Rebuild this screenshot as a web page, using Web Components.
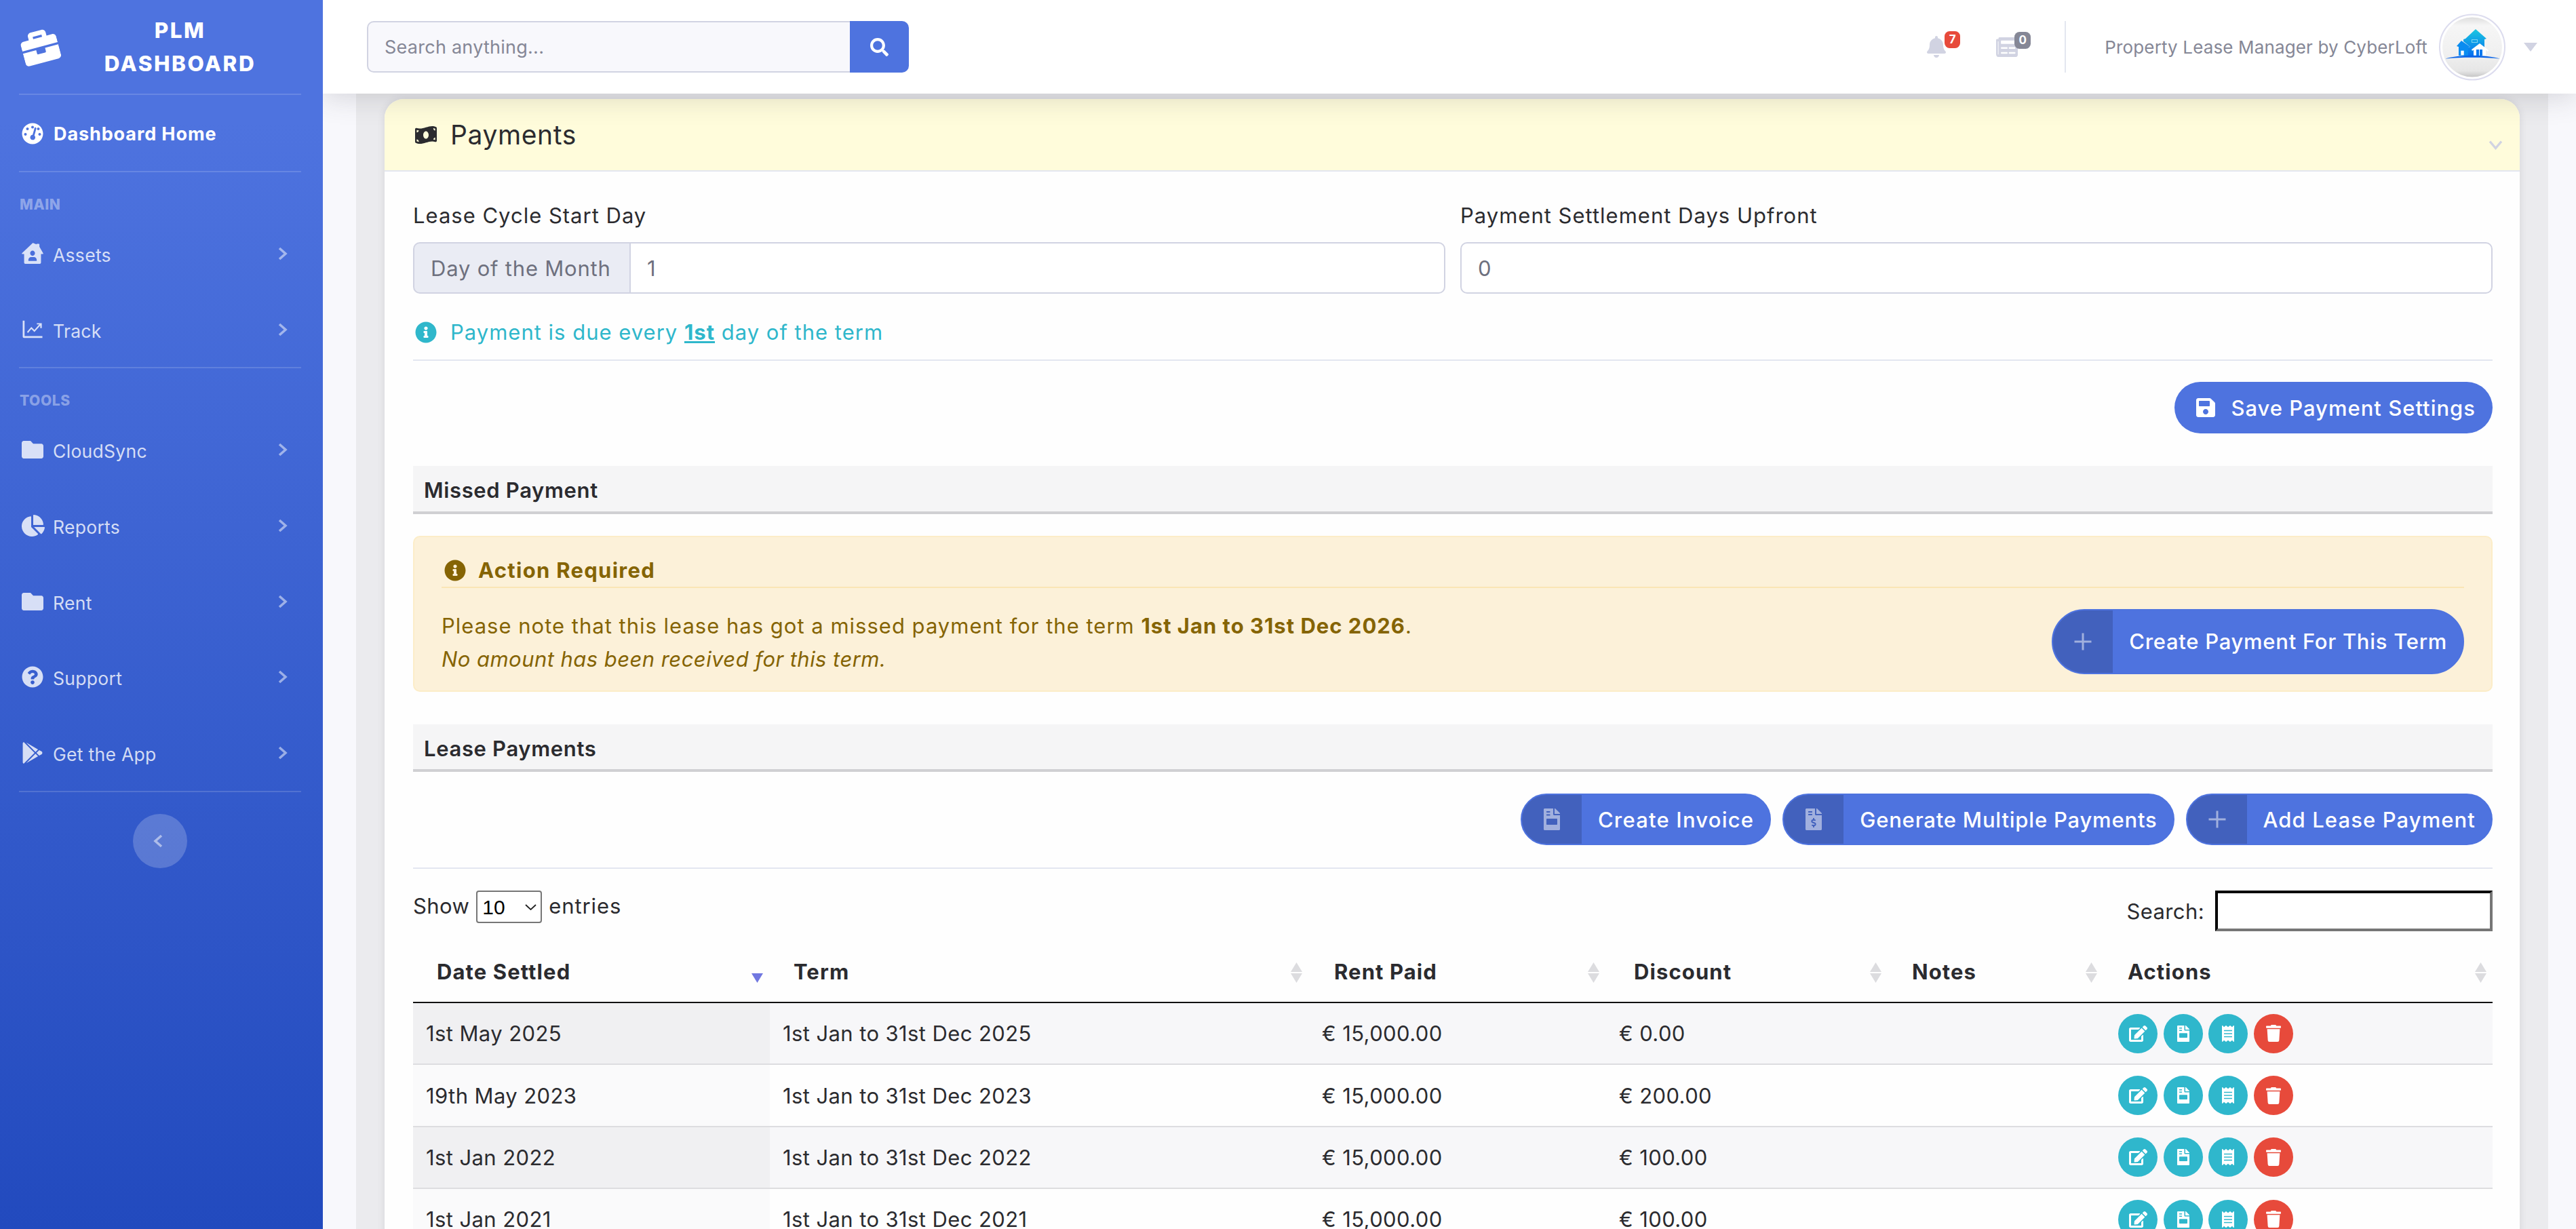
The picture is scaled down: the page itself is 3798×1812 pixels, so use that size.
<!DOCTYPE html>
<html lang="en">
<head>
<meta charset="utf-8">
<title>PLM Dashboard</title>
<style>
  html, body { margin: 0; height: 100%; overflow: hidden; }
  body { display: flex; background: #f8f8fc; font-family: "Inter", "Liberation Sans", sans-serif; color: #2b2b2f; }
</style>
</head>
<body>
<plm-sidebar></plm-sidebar>
<plm-main>
  <plm-topbar></plm-topbar>
  <plm-panel>
    <plm-card icon="money" heading="Payments">
      <payment-settings></payment-settings>
      <plm-section heading="Missed Payment"></plm-section>
      <plm-alert></plm-alert>
      <plm-section heading="Lease Payments"></plm-section>
      <div style="display:flex;justify-content:flex-end;gap:17px;margin-top:32px">
        <split-button icon="invoice" style="letter-spacing:1.2px">Create Invoice</split-button>
        <split-button icon="invoiceDollar">Generate Multiple Payments</split-button>
        <split-button icon="plus" style="letter-spacing:1.1px">Add Lease Payment</split-button>
      </div>
      <payments-table></payments-table>
    </plm-card>
  </plm-panel>
</plm-main>

<script>
// third entry = extra svg attributes for the icons that need them
const STRETCH = 'preserveAspectRatio="none"';
const ICONS = {
  briefcase: ['0 0 512 512', 'M320 336c0 8.84-7.16 16-16 16h-96c-8.84 0-16-7.16-16-16v-48H0v144c0 25.6 22.4 48 48 48h416c25.6 0 48-22.4 48-48V288H320v48zm144-208h-80V80c0-25.6-22.4-48-48-48H176c-25.6 0-48 22.4-48 48v48H48c-25.6 0-48 22.4-48 48v80h512v-80c0-25.6-22.4-48-48-48zm-144 0H192V96h128v32z'],
  gauge: ['0 0 512 512', 'M256 8C119 8 8 119 8 256s111 248 248 248 248-111 248-248S393 8 256 8zm0 64c17.7 0 32 14.3 32 32s-14.3 32-32 32-32-14.3-32-32 14.3-32 32-32zM88 304c-17.7 0-32-14.3-32-32s14.3-32 32-32 32 14.300 32 32-14.3 32-32 32zm48-128c-17.700 0-32-14.3-32-32s14.3-32 32-32 32 14.3 32 32-14.3 32-32 32zm208-34-44 158c15 13 22 30 20 50-3 33-33 58-66 54-33-3-58-33-54-66 3-30 27-53 57-55l44-157c3-12 16-20 28-16 12 3 19 20 15 32zm80 162c-17.700 0-32-14.3-32-32s14.3-32 32-32 32 14.300 32 32-14.3 32-32 32zm-32-128c-17.700 0-32-14.3-32-32s14.300-32 32-32 32 14.3 32 32-14.3 32-32 32z'],
  houseUser: ['0 0 576 512', 'M288 8 8 250c-8 8-4 22 8 22h48v208c0 18 14 32 32 32h384c18 0 32-14 32-32V272h48c12 0 16-14 8-22L470 96V40c0-9-7-16-16-16h-48c-9 0-16 7-16 16v-4L312 8c-7-6-17-6-24 0zm0 180c35 0 64 29 64 64s-29 64-64 64-64-29-64-64 29-64 64-64zm-112 236c0-42 34-76 76-76h72c42 0 76 34 76 76 0 9-7 16-16 16H192c-9 0-16-7-16-16z', STRETCH],
  folder: ['0 64 512 384', 'M464 128H272l-64-64H48C21.49 64 0 85.49 0 112v288c0 26.51 21.49 48 48 48h416c26.51 0 48-21.49 48-48V176c0-26.51-21.49-48-48-48z', STRETCH],
  pie: ['0 0 544 512', 'M527.79 288H290.5l158.03 158.03c6.04 6.04 15.98 6.53 22.19.68 38.7-36.46 65.32-85.61 73.13-140.86 1.34-9.46-6.51-17.85-16.06-17.85zm-15.83-64.8C503.72 103.74 408.26 8.28 288.8.04 279.68-.59 272 7.1 272 16.24V240h223.77c9.14 0 16.82-7.68 16.19-16.8zM224 288V50.71c0-9.55-8.39-17.4-17.84-16.06C86.99 51.49-4.1 155.6.14 280.37 4.5 408.51 114.83 513.59 243.03 511.98c50.4-.63 96.97-16.87 135.26-44.03 7.9-5.6 8.42-17.23 1.57-24.08L224 288z', STRETCH],
  question: ['0 0 512 512', 'M504 256c0 136.997-111.043 248-248 248S8 392.997 8 256C8 119.083 119.043 8 256 8s248 111.083 248 248zM262.655 90c-54.497 0-89.255 22.957-116.549 63.758-3.536 5.286-2.353 12.415 2.715 16.258l34.699 26.31c5.205 3.947 12.621 3.008 16.665-2.122 17.864-22.658 30.113-35.797 57.303-35.797 20.429 0 45.698 13.148 45.698 32.958 0 14.976-12.363 22.667-32.534 33.976C247.128 238.528 216 254.941 216 296v4c0 6.627 5.373 12 12 12h56c6.627 0 12-5.373 12-12v-1.333c0-28.462 83.186-29.647 83.186-106.667 0-58.002-60.165-102-116.531-102zM256 338c-25.365 0-46 20.635-46 46 0 25.364 20.635 46 46 46s46-20.636 46-46c0-25.365-20.635-46-46-46z'],
  play: ['0 0 512 512', 'M325.3 234.3L104.6 13l280.8 161.2-60.1 60.1zM47 0C34 6.8 25.3 19.2 25.3 35.3v441.3c0 16.1 8.7 28.5 21.7 35.3l256.6-256L47 0zm425.2 225.6l-58.9-34.1-65.7 64.5 65.7 64.5 60.1-34.1c18-14.3 18-46.5-1.2-60.8zM104.6 499l280.8-161.2-60.1-60.1L104.6 499z'],
  info: ['0 0 512 512', 'M256 8C119.043 8 8 119.083 8 256c0 136.997 111.043 248 248 248s248-111.003 248-248C504 119.083 392.957 8 256 8zm0 110c23.196 0 42 18.804 42 42s-18.804 42-42 42-42-18.804-42-42 18.804-42 42-42zm56 254c0 6.627-5.373 12-12 12h-88c-6.627 0-12-5.373-12-12v-24c0-6.627 5.373-12 12-12h12v-64h-12c-6.627 0-12-5.373-12-12v-24c0-6.627 5.373-12 12-12h64c6.627 0 12 5.373 12 12v100h12c6.627 0 12 5.373 12 12v24z'],
  search: ['0 0 512 512', 'M505 442.7L405.3 343c-4.5-4.5-10.6-7-17-7H372c27.6-35.3 44-79.7 44-128C416 93.1 322.9 0 208 0S0 93.1 0 208s93.1 208 208 208c48.3 0 92.7-16.4 128-44v16.3c0 6.4 2.5 12.5 7 17l99.7 99.7c9.4 9.4 24.6 9.4 33.9 0l28.3-28.3c9.4-9.4 9.4-24.6.1-34zM208 336c-70.7 0-128-57.2-128-128 0-70.7 57.2-128 128-128 70.7 0 128 57.2 128 128 0 70.7-57.2 128-128 128z'],
  bell: ['0 0 448 512', 'M224 512c35.32 0 63.97-28.65 63.97-64H160.03c0 35.35 28.65 64 63.97 64zm215.39-149.71c-19.32-20.76-55.47-51.99-55.47-154.29 0-77.7-54.48-139.9-127.94-155.16V32c0-17.67-14.32-32-31.98-32s-31.98 14.33-31.98 32v20.84C118.56 68.1 64.08 130.3 64.08 208c0 102.3-36.15 133.53-55.47 154.29-6 6.45-8.66 14.16-8.61 21.71.11 16.4 12.98 32 32.1 32h383.8c19.12 0 32-15.6 32.1-32 .05-7.55-2.61-15.27-8.61-21.71z'],
  news: ['0 64 576 384', 'M552 64H88c-13.255 0-24 10.745-24 24v8H24c-13.255 0-24 10.745-24 24v272c0 30.928 25.072 56 56 56h472c26.51 0 48-21.49 48-48V88c0-13.255-10.745-24-24-24zM56 400a8 8 0 0 1-8-8V144h16v248a8 8 0 0 1-8 8zm236-16H140c-6.627 0-12-5.373-12-12v-8c0-6.627 5.373-12 12-12h152c6.627 0 12 5.373 12 12v8c0 6.627-5.373 12-12 12zm208 0H348c-6.627 0-12-5.373-12-12v-8c0-6.627 5.373-12 12-12h152c6.627 0 12 5.373 12 12v8c0 6.627-5.373 12-12 12zm-208-96H140c-6.627 0-12-5.373-12-12v-8c0-6.627 5.373-12 12-12h152c6.627 0 12 5.373 12 12v8c0 6.627-5.373 12-12 12zm208 0H348c-6.627 0-12-5.373-12-12v-8c0-6.627 5.373-12 12-12h152c6.627 0 12 5.373 12 12v8c0 6.627-5.373 12-12 12zm0-96H140c-6.627 0-12-5.373-12-12v-40c0-6.627 5.373-12 12-12h360c6.627 0 12 5.373 12 12v40c0 6.627-5.373 12-12 12z', STRETCH],
  money: ['0 32 640 448', 'M621.16 54.46C582.37 38.19 543.55 32 504.75 32c-123.17-.01-246.33 62.34-369.5 62.34-30.89 0-61.76-3.92-92.65-13.72-3.47-1.1-6.95-1.62-10.35-1.62C15.04 79 0 92.32 0 110.81v317.26c0 12.63 7.23 24.6 18.84 29.46C57.63 473.81 96.45 480 135.25 480c123.17 0 246.34-62.35 369.51-62.35 30.89 0 61.76 3.92 92.65 13.72 3.47 1.1 6.95 1.62 10.35 1.62 17.21 0 32.25-13.32 32.25-31.81V83.93c-.01-12.64-7.24-24.6-18.85-29.47zM48 132.22c20.12 5.04 41.12 7.57 62.72 8.93C104.84 170.54 79 192.69 48 192.69v-60.47zm0 285v-47.78c34.37 0 62.18 27.27 63.71 61.4-22.53-1.81-43.59-6.31-63.71-13.62zM320 352c-44.19 0-80-42.99-80-96 0-53.02 35.82-96 80-96s80 42.98 80 96c0 53.03-35.83 96-80 96zm272 27.78c-17.52-4.39-35.71-6.85-54.32-8.44 5.87-26.08 27.5-45.88 54.32-49.28v57.72zm0-236.11c-30.89-3.91-54.86-29.7-55.81-61.55 19.54 2.17 38.09 6.23 55.81 12.66v48.89z', STRETCH],
  save: ['0 0 448 512', 'M433.941 129.941l-83.882-83.882A48 48 0 0 0 316.118 32H48C21.49 32 0 53.49 0 80v352c0 26.51 21.49 48 48 48h352c26.51 0 48-21.49 48-48V163.882a48 48 0 0 0-14.059-33.941zM224 416c-35.346 0-64-28.654-64-64 0-35.346 28.654-64 64-64s64 28.654 64 64c0 35.346-28.654 64-64 64zm96-304.52V212c0 6.627-5.373 12-12 12H76c-6.627 0-12-5.373-12-12V108c0-6.627 5.373-12 12-12h228.52c3.183 0 6.235 1.264 8.485 3.515l3.48 3.48A11.996 11.996 0 0 1 320 111.48z'],
  plus: ['0 0 448 512', 'M200 56h48v176h176v48H248v176h-48V280H24v-48h176z'],
  invoice: ['0 0 384 512', 'M224 0H24C10.700 0 0 10.700 0 24v464c0 13.300 10.700 24 24 24h336c13.300 0 24-10.700 24-24V160H248c-13.200 0-24-10.800-24-24zM256 0v128h128v-6.100c0-6.300-2.500-12.400-7-16.900L279.100 7c-4.500-4.500-10.600-7-17-7zM72 64h72c4.400 0 8 3.600 8 8v16c0 4.400-3.600 8-8 8H72c-4.400 0-8-3.600-8-8V72c0-4.400 3.600-8 8-8zm0 72h72c4.400 0 8 3.600 8 8v16c0 4.400-3.600 8-8 8H72c-4.400 0-8-3.600-8-8v-16c0-4.400 3.600-8 8-8zm8 104h224c8.800 0 16 7.200 16 16v112c0 8.800-7.200 16-16 16H80c-8.800 0-16-7.200-16-16V256c0-8.800 7.200-16 16-16z', 'fill-rule="evenodd"'],
  invoiceDollar: ['0 0 384 512', 'M377 105L279.1 7c-4.5-4.5-10.6-7-17-7H256v128h128v-6.1c0-6.3-2.5-12.4-7-16.9zm-153 31V0H24C10.7 0 0 10.7 0 24v464c0 13.3 10.7 24 24 24h336c13.3 0 24-10.7 24-24V160H248c-13.2 0-24-10.8-24-24zM64 72c0-4.42 3.58-8 8-8h80c4.42 0 8 3.58 8 8v16c0 4.42-3.58 8-8 8H72c-4.42 0-8-3.58-8-8V72zm0 80v-16c0-4.42 3.58-8 8-8h80c4.42 0 8 3.58 8 8v16c0 4.42-3.58 8-8 8H72c-4.42 0-8-3.58-8-8zm144 263.88V440c0 4.42-3.58 8-8 8h-16c-4.42 0-8-3.58-8-8v-24.29c-11.29-.58-22.27-4.52-31.37-11.35-3.9-2.93-4.1-8.77-.57-12.14l11.75-11.21c2.77-2.64 6.89-2.76 10.13-.73 3.87 2.42 8.26 3.72 12.82 3.72h28.11c6.5 0 11.8-5.92 11.8-13.19 0-5.95-3.61-11.19-8.77-12.73l-45-13.5c-18.59-5.58-31.58-23.42-31.58-43.39 0-24.52 19.05-44.44 42.67-45.07V232c0-4.42 3.58-8 8-8h16c4.42 0 8 3.58 8 8v24.29c11.29.58 22.27 4.51 31.37 11.35 3.9 2.93 4.1 8.77.57 12.14l-11.75 11.21c-2.77 2.64-6.89 2.76-10.13.73-3.87-2.43-8.26-3.72-12.82-3.72h-28.11c-6.5 0-11.8 5.92-11.8 13.19 0 5.95 3.61 11.19 8.77 12.73l45 13.5c18.59 5.58 31.58 23.42 31.58 43.39 0 24.53-19.05 44.44-42.67 45.07z'],
  edit: ['0 0 576 512', 'M402.6 83.2l90.2 90.2c3.8 3.8 3.8 10 0 13.8L274.4 405.6l-92.8 10.3c-12.4 1.4-22.9-9.1-21.5-21.5l10.3-92.8L388.8 83.2c3.8-3.8 10-3.8 13.8 0zm162-22.9l-48.8-48.8c-15.2-15.2-39.9-15.2-55.2 0l-35.4 35.4c-3.8 3.8-3.8 10 0 13.8l90.2 90.2c3.8 3.8 10 3.8 13.8 0l35.4-35.4c15.2-15.3 15.2-40 0-55.2zM384 346.2V448H64V128h229.8c3.2 0 6.2-1.3 8.5-3.5l40-40c7.6-7.6 2.2-20.5-8.5-20.5H48C21.5 64 0 85.5 0 112v352c0 26.5 21.5 48 48 48h352c26.5 0 48-21.5 48-48V306.2c0-10.7-12.9-16-20.5-8.5l-40 40c-2.2 2.3-3.5 5.3-3.5 8.5z'],
  receipt: ['0 0 384 512', 'M358.4 3.2L320 48 265.6 3.2a15.9 15.9 0 0 0-19.2 0L192 48 137.6 3.2a15.9 15.9 0 0 0-19.2 0L64 48 25.6 3.2C15-4.7 0 2.8 0 16v480c0 13.2 15 20.7 25.6 12.8L64 464l54.4 44.8a15.9 15.9 0 0 0 19.2 0L192 464l54.4 44.8a15.9 15.9 0 0 0 19.2 0L320 464l38.4 44.8c10.5 7.9 25.6.4 25.6-12.8V16c0-13.2-15-20.7-25.6-12.8zM320 360c0 4.4-3.6 8-8 8H72c-4.4 0-8-3.6-8-8v-16c0-4.4 3.6-8 8-8h240c4.4 0 8 3.6 8 8v16zm0-96c0 4.4-3.6 8-8 8H72c-4.4 0-8-3.6-8-8v-16c0-4.4 3.6-8 8-8h240c4.4 0 8 3.6 8 8v16zm0-96c0 4.4-3.6 8-8 8H72c-4.4 0-8-3.6-8-8v-16c0-4.4 3.6-8 8-8h240c4.4 0 8 3.6 8 8v16z'],
  trash: ['0 0 448 512', 'M432 32H312l-9.4-18.7A24 24 0 0 0 281.1 0H166.8a23.72 23.72 0 0 0-21.4 13.3L136 32H16A16 16 0 0 0 0 48v32a16 16 0 0 0 16 16h416a16 16 0 0 0 16-16V48a16 16 0 0 0-16-16zM53.2 467a48 48 0 0 0 47.9 45h245.8a48 48 0 0 0 47.9-45L416 128H32z'],
  chartLine: ['0 0 32 32', 'M0 2h3v25h29v3H2a2 2 0 0 1-2-2zm7 18 7-8 5 5 8-9h-4V6h8v8h-2.500v-4l-9.500 10.500-5-5-5.500 6.500z']
};

function icon(name, w, h) {
  const [box, d, extra = ''] = ICONS[name];
  return `<svg viewBox="${box}" width="${w}" height="${h}" ${extra} style="display:block;flex:none" fill="currentColor" aria-hidden="true"><path d="${d}"/></svg>`;
}

const CHEVRON = `<svg viewBox="0 0 14 20" width="14" height="20" fill="none" stroke="currentColor" stroke-width="3.6"><path d="M2 2l9 8-9 8"/></svg>`;

class PlmSidebar extends HTMLElement {
  constructor() {
    super();
    this.attachShadow({ mode: 'open' });
    const item = (ic, label, w = 32, h = 32) => `<a class="item"><span class="ic">${icon(ic, w, h)}</span><span class="lb">${label}</span><span class="chev">${CHEVRON}</span></a>`;
    this.shadowRoot.innerHTML = `
      <style>
        :host { display: block; flex: none; width: 476px; height: 100%; background: linear-gradient(180deg, #4e73df 10%, #224abe 100%); color: #fff; font-family: "Inter", "Liberation Sans", sans-serif; position: relative; z-index: 3; }
        .brand { height: 138px; display: flex; align-items: center; position: relative; }
        .brand svg { margin-left: 32px; transform: rotate(-15deg); }
        .brand div { position: absolute; left: 80px; width: 371px; text-align: center; font-weight: 800; font-size: 31.500px; line-height: 49px; letter-spacing: 2.500px; }
        hr { border: 0; height: 2px; margin: 0 32px 0 28px; background: rgba(255,255,255,.15); }
        .home { height: 112px; display: flex; align-items: center; padding-left: 32px; font-weight: 700; font-size: 27px; letter-spacing: .9px; gap: 15px; padding-top: 2px; box-sizing: border-box; }
        h6 { margin: 0; height: 66px; padding: 37px 0 0 29px; box-sizing: border-box; font-size: 21px; line-height: 22px; font-weight: 800; letter-spacing: .6px; color: rgba(255,255,255,.4); }
        .item { height: 111.7px; display: flex; align-items: center; padding-left: 32px; color: rgba(255,255,255,.8); font-size: 26.500px; font-weight: 400; letter-spacing: .3px; }
        .ic { width: 46px; margin-top: -4px; }
        .lb { flex: 1; }
        .chev { color: rgba(255,255,255,.5); width: 66px; margin-top: -4px; }
        .toggle { width: 80px; height: 80px; margin: 32px 0 0 196px; border-radius: 50%; background: rgba(255,255,255,.2); display: flex; align-items: center; justify-content: center; color: rgba(255,255,255,.5); }
        .toggle svg { transform: scaleX(-1); margin-right: 6px; }
      </style>
      <div class="brand">${icon('briefcase', 54, 54)}<div>PLM<br>DASHBOARD</div></div>
      <hr>
      <div class="home">${icon('gauge', 32, 32)}<span>Dashboard Home</span></div>
      <hr>
      <h6>MAIN</h6>
      ${item('houseUser', 'Assets', 32, 31)}
      ${item('chartLine', 'Track', 32, 29)}
      <hr style="margin-top:-2px">
      <h6>TOOLS</h6>
      ${item('folder', 'CloudSync', 32, 26)}
      ${item('pie', 'Reports', 34, 32)}
      ${item('folder', 'Rent', 32, 26)}
      ${item('question', 'Support')}
      ${item('play', 'Get the App')}
      <hr style="margin-top:-2px">
      <div class="toggle">${CHEVRON}</div>
    `;
  }
}

class PlmMain extends HTMLElement {
  constructor() {
    super();
    this.attachShadow({ mode: 'open' });
    this.shadowRoot.innerHTML = `
      <style>:host { display: flex; flex-direction: column; flex: 1; min-width: 0; height: 100%; overflow: hidden; }</style>
      <slot></slot>`;
  }
}

class PlmTopbar extends HTMLElement {
  constructor() {
    super();
    this.attachShadow({ mode: 'open' });
    this.shadowRoot.innerHTML = `
      <style>
        :host { display: flex; flex: none; align-items: center; height: 138px; background: #fff; box-shadow: 0 4px 40px rgba(58,59,69,.2); position: relative; z-index: 2; padding: 0 57px 0 65px; }
        .search { display: flex; width: 799px; height: 76px; }
        input { flex: 1; min-width: 0; box-sizing: border-box; background: #f8f8fc; border: 2px solid #d1d3e2; border-right: 0; border-radius: 10px 0 0 10px; padding: 0 24px; font: 400 27px "Inter", sans-serif; letter-spacing: .25px; }
        input::placeholder { color: #858796; opacity: 1; }
        .go { width: 87px; background: #4e73df; color: #fff; border-radius: 0 10px 10px 0; display: flex; align-items: center; justify-content: center; }
        .right { margin-left: auto; display: flex; align-items: center; }
        .bell { position: relative; color: #d1d3e2; width: 32px; }
        .badge { position: absolute; top: -7px; left: 26px; width: 23px; height: 25px; border-radius: 7.500px; color: #fff; font: 700 17px/25px "Inter", sans-serif; text-align: center; }
        .news { margin-left: 70px; }
        .sep { width: 2px; height: 76px; background: #e3e6f0; margin: 0 57px 0 69px; }
        .name { font-size: 26px; letter-spacing: .14px; color: #858796; white-space: nowrap; }
        .avatar { margin-left: 17px; width: 98px; height: 99px; flex: none; }
        .caret { margin-left: 27px; width: 0; height: 0; border: 10px solid transparent; border-top: 13px solid #d1d3e2; border-bottom: 0; }
      </style>
      <div class="search"><input placeholder="Search anything..."><div class="go">${icon('search', 27, 27)}</div></div>
      <div class="right">
        <div class="bell">${icon('bell', 28, 32)}<span class="badge" style="background:#e74a3b">7</span></div>
        <div class="bell news">${icon('news', 32, 29)}<span class="badge" style="background:#858796;left:27px;width:24px;top:-8px">0</span></div>
        <div class="sep"></div>
        <span class="name">Property Lease Manager by CyberLoft</span>
        <svg class="avatar" viewBox="0 0 98 99">
          <defs>
            <linearGradient id="ball" x1="0" y1="0" x2="0" y2="1"><stop offset="0" stop-color="#dedede"/><stop offset=".14" stop-color="#f6f6f6"/><stop offset=".6" stop-color="#f0f0f0"/><stop offset=".9" stop-color="#e6e6e6"/><stop offset="1" stop-color="#c6c6c6"/></linearGradient>
            <linearGradient id="house" x1="0" y1="0" x2="0" y2="1"><stop offset="0" stop-color="#1ac8e0"/><stop offset="1" stop-color="#0670f0"/></linearGradient>
          </defs>
          <circle cx="49" cy="49.500" r="48" fill="#fff" stroke="#dcdcee" stroke-width="2"/>
          <circle cx="49" cy="49.500" r="44" fill="url(#ball)"/>
          <path fill="url(#house)" d="M54 23 70 37 67 38 V62 H43 V50 L46 49 36 41 36 38 39 37z"/>
          <path fill="#0a8cf0" d="M33 40 26 48 29 49V62H43V50L46 49z"/>
          <rect x="32.300" y="54.700" width="4.400" height="6.600" fill="#fff"/>
          <path fill="#fff" d="M60 44 73 54 72 56 69 53.500V62H51V53.500L49 55 48 53z"/>
          <rect x="55" y="53" width="9" height="9" fill="#0878ee"/>
          <rect x="59" y="53" width="1" height="9" fill="#fff"/>
          <rect x="48.500" y="38.500" width="8" height="4" fill="none" stroke="#7fd4f0" stroke-width="1"/>
          <path fill="#0a64e8" d="M9 66.500C30 60 68 60 90 66.500 68 64 30 64 9 66.500z"/>
        </svg>
        <span class="caret"></span>
      </div>
    `;
  }
}

class PlmPanel extends HTMLElement {
  constructor() {
    super();
    this.attachShadow({ mode: 'open' });
    this.shadowRoot.innerHTML = `
      <style>:host { display: block; flex: 1; min-height: 0; margin: 0 41px 0 49px; padding: 8px 42px 0; background: #ebebee; overflow: hidden; }</style>
      <slot></slot>`;
  }
}

class PlmCard extends HTMLElement {
  constructor() {
    super();
    this.attachShadow({ mode: 'open' });
    this.shadowRoot.innerHTML = `
      <style>
        :host { display: block; background: #fefefe; border-radius: 28px 28px 0 0; box-shadow: 0 0 12px rgba(58,59,69,.12); }
        .head { height: 105px; display: flex; align-items: center; gap: 20px; padding-left: 45px; background: #fffcdb; border-bottom: 2px solid #e3e6f0; border-radius: 28px 28px 0 0; font-size: 39px; letter-spacing: .6px; color: #2b2b2f; position: relative; }
        .arrow { position: absolute; right: 25px; top: 61px; color: #d1d3e2; }
        .body { padding: 41px 40px 0 42px; }
      </style>
      <div class="head"><span id="ic"></span><span id="t"></span>
        <svg class="arrow" width="21" height="14" viewBox="0 0 21 14" fill="none" stroke="currentColor" stroke-width="3.4"><path d="M2 1.500l8.500 10 8.500-10"/></svg>
      </div>
      <div class="body"><slot></slot></div>`;
    this.shadowRoot.querySelector('#ic').innerHTML = icon(this.getAttribute('icon') || 'money', 32, 26);
    this.shadowRoot.querySelector('#t').textContent = this.getAttribute('heading');
  }
}

class PaymentSettings extends HTMLElement {
  constructor() {
    super();
    this.attachShadow({ mode: 'open' });
    this.shadowRoot.innerHTML = `
      <style>
        :host { display: block; font-size: 31px; letter-spacing: 1px; }
        .cols { display: grid; grid-template-columns: 1522px 1522px; column-gap: 22px; }
        label { display: block; line-height: 48px; color: #2b2b2f; margin-bottom: 15px; }
        .group { display: flex; height: 76px; }
        .pre { width: 319px; box-sizing: border-box; background: #eaecf4; border: 2px solid #d1d3e2; border-right: 0; border-radius: 10px 0 0 10px; display: flex; align-items: center; padding-left: 24px; color: #6e707e; letter-spacing: .8px; white-space: nowrap; }
        input { flex: 1; min-width: 0; box-sizing: border-box; border: 2px solid #d1d3e2; border-radius: 10px; padding: 0 24px; font: 400 31px "Inter", sans-serif; color: #6e707e; background: #fff; }
        .pre + input { border-radius: 0 10px 10px 0; }
        .note { display: flex; align-items: center; gap: 20px; margin-top: 33px; line-height: 48px; color: #2fb7cb; padding-left: 3px; }
        .note b { text-decoration: underline; }
        hr { border: 0; height: 2px; background: #e3e6f0; margin: 16px 0 31px; }
        .save { display: flex; justify-content: flex-end; }
        .btn { display: flex; align-items: center; height: 76px; border-radius: 38px; background: #4e73df; color: #fff; padding: 0 25px 0 32px; gap: 23px; font-weight: 500; }
      </style>
      <div class="cols">
        <div><label>Lease Cycle Start Day</label><div class="group"><span class="pre">Day of the Month</span><input value="1"></div></div>
        <div><label>Payment Settlement Days Upfront</label><div class="group"><input value="0"></div></div>
      </div>
      <div class="note">${icon('info', 32, 32)}<span>Payment is due every <b>1st</b> day of the term</span></div>
      <hr>
      <div class="save"><div class="btn">${icon('save', 28, 32)}<span>Save Payment Settings</span></div></div>`;
  }
}

class PlmSection extends HTMLElement {
  constructor() {
    super();
    this.attachShadow({ mode: 'open' });
    this.shadowRoot.innerHTML = `
      <style>
        :host { display: block; margin-top: 48px; height: 70.500px; box-sizing: border-box; background: #f5f5f6; border-bottom: 4px solid #d0d0d3; padding: 0 0 0 16px; font-size: 31px; letter-spacing: .65px; font-weight: 600; line-height: 72px; color: #2b2b2f; }
      </style><span></span>`;
    this.shadowRoot.querySelector('span').textContent = this.getAttribute('heading');
  }
}

class SplitButton extends HTMLElement {
  constructor() {
    super();
    this.attachShadow({ mode: 'open' });
    this.shadowRoot.innerHTML = `
      <style>
        :host { display: inline-flex; height: 76px; box-sizing: border-box; border: 2px solid #4e73df; border-radius: 38px; overflow: hidden; background: #4e73df; color: #fff; font-size: 31px; letter-spacing: .8px; font-weight: 500; align-items: stretch; white-space: nowrap; }
        :host([large]) { height: 96px; border-radius: 48px; letter-spacing: .72px; }
        .i { width: 88px; background: rgba(0,0,0,.15); display: flex; align-items: center; justify-content: center; color: rgba(255,255,255,.5); box-sizing: border-box; }
        .t { display: flex; align-items: center; padding: 0 23px 0 24px; }
      </style>
      <span class="i">${icon(this.getAttribute('icon'), 28, 32)}</span>
      <span class="t"><slot></slot></span>`;
  }
}

class PlmAlert extends HTMLElement {
  constructor() {
    super();
    this.attachShadow({ mode: 'open' });
    this.shadowRoot.innerHTML = `
      <style>
        :host { display: block; margin-top: 32px; box-sizing: border-box; height: 230px; background: #fcf1d9; border: 2px solid #fcedc8; border-radius: 10px; padding: 25px 40px 0 40px; color: #856404; font-size: 31px; letter-spacing: 1px; }
        .h { display: flex; align-items: center; gap: 18px; font-weight: 700; line-height: 48px; padding-left: 4px; letter-spacing: 1.3px; }
        hr { border: 0; height: 2px; background: #fae5b5; margin: 0; }
        .b { display: flex; justify-content: space-between; margin-top: 31px; }
        p { margin: 0; line-height: 49px; }
        i { letter-spacing: .45px; }
      </style>
      <div class="h">${icon('info', 32, 32)}<span>Action Required</span></div>
      <hr>
      <div class="b">
        <div><p>Please note that this lease has got a missed payment for the term <b>1st Jan to 31st Dec 2026</b>.</p><p><i>No amount has been received for this term.</i></p></div>
        <split-button large icon="plus">Create Payment For This Term</split-button>
      </div>`;
  }
}

class PaymentsTable extends HTMLElement {
  constructor() {
    super();
    this.attachShadow({ mode: 'open' });
    const arrows = (sorted) => `<svg class="sort" width="17" height="30" viewBox="0 0 17 30">
        ${sorted ? '' : '<path d="M8.500 0 17 14H0z" fill="#dcdcdf"/>'}
        <path d="M0 16h17L8.500 30z" fill="${sorted ? '#7077e0' : '#dcdcdf'}"/></svg>`;
    const heads = ['Date Settled', 'Term', 'Rent Paid', 'Discount', 'Notes', 'Actions'];
    const rows = [
      ['1st May 2025', '1st Jan to 31st Dec 2025', '€ 15,000.00', '€ 0.00'],
      ['19th May 2023', '1st Jan to 31st Dec 2023', '€ 15,000.00', '€ 200.00'],
      ['1st Jan 2022', '1st Jan to 31st Dec 2022', '€ 15,000.00', '€ 100.00'],
      ['1st Jan 2021', '1st Jan to 31st Dec 2021', '€ 15,000.00', '€ 100.00']
    ];
    const actions = `<span class="acts">
      <span class="a">${icon('edit', 27, 24)}</span>
      <span class="a">${icon('invoice', 18, 24)}</span>
      <span class="a">${icon('receipt', 18, 24)}</span>
      <span class="a del">${icon('trash', 22, 25)}</span></span>`;
    this.shadowRoot.innerHTML = `
      <style>
        :host { display: block; font-size: 31px; letter-spacing: .4px; color: #2b2b2f; }
        hr { border: 0; height: 2px; background: #e3e6f0; margin: 33px 0 32px; }
        .tools { display: flex; justify-content: space-between; height: 60px; }
        .len { display: flex; align-items: flex-start; gap: 10px; line-height: 46px; }
        .pick { position: relative; display: block; height: 48px; }
        .pick svg { position: absolute; right: 8px; top: 20px; pointer-events: none; }
        select { appearance: none; display: block; width: 97px; height: 48px; font: 400 30px "Liberation Sans", sans-serif; border: 2px solid #767676; border-radius: 4px; background: #fff; color: #000; padding: 0 0 0 7px; }
        .find { display: flex; align-items: center; gap: 16px; }
        .find input { width: 409px; height: 60px; box-sizing: border-box; border: 4px inset #767676; border-top-color: #222; border-left-color: #222; background: #fff; }
        .r { display: grid; grid-template-columns: 526px 795px 438px 416px 318px 574px; }
        .th { height: 104px; position: relative; padding: 15px 0 0 35px; box-sizing: border-box; display: flex; align-items: center; font-weight: 700; letter-spacing: 1.1px; }
        .th:nth-child(3) { padding-left: 37px; }
        .th:nth-child(4) { padding-left: 41px; }
        .sort { position: absolute; right: 10px; bottom: 28px; }
        .head { border-bottom: 2px solid #111; }
        .row { height: 91.4px; box-sizing: border-box; border-bottom: 2px solid #dddde0; }
        .row > span { display: flex; align-items: center; padding-left: 19px; }
        .row > span:last-child { padding-left: 21px; }
        .row:nth-child(odd) { background: #f7f7f9; }
        .row:nth-child(odd) > span:first-child { background: #f0f0f2; }
        .row:nth-child(even) > span:first-child { background: #fafafb; }
        .acts { gap: 8.700px; display: flex; }
        .a { width: 58px; height: 58px; border-radius: 50%; background: #2fb7cc; color: #fff; display: flex; align-items: center; justify-content: center; }
        .del { background: #e74a3b; }
      </style>
      <hr>
      <div class="tools">
        <div class="len"><span>Show</span><span class="pick"><select><option>10</option><option>25</option></select>
          <svg width="17" height="9" viewBox="0 0 17 9" fill="none" stroke="#222" stroke-width="1.800"><path d="M1 1l7.500 7L16 1"/></svg></span><span style="letter-spacing:.9px">entries</span></div>
        <div class="find"><span>Search:</span><input></div>
      </div>
      <div class="r head">${heads.map((h, i) => `<div class="th">${h}${arrows(i === 0)}</div>`).join('')}</div>
      ${rows.map(r => `<div class="r row">${r.map(c => `<span>${c}</span>`).join('')}<span></span><span>${actions}</span></div>`).join('')}`;
  }
}

customElements.define('plm-sidebar', PlmSidebar);
customElements.define('plm-main', PlmMain);
customElements.define('plm-topbar', PlmTopbar);
customElements.define('plm-panel', PlmPanel);
customElements.define('plm-card', PlmCard);
customElements.define('payment-settings', PaymentSettings);
customElements.define('plm-section', PlmSection);
customElements.define('split-button', SplitButton);
customElements.define('plm-alert', PlmAlert);
customElements.define('payments-table', PaymentsTable);
</script>
</body>
</html>
